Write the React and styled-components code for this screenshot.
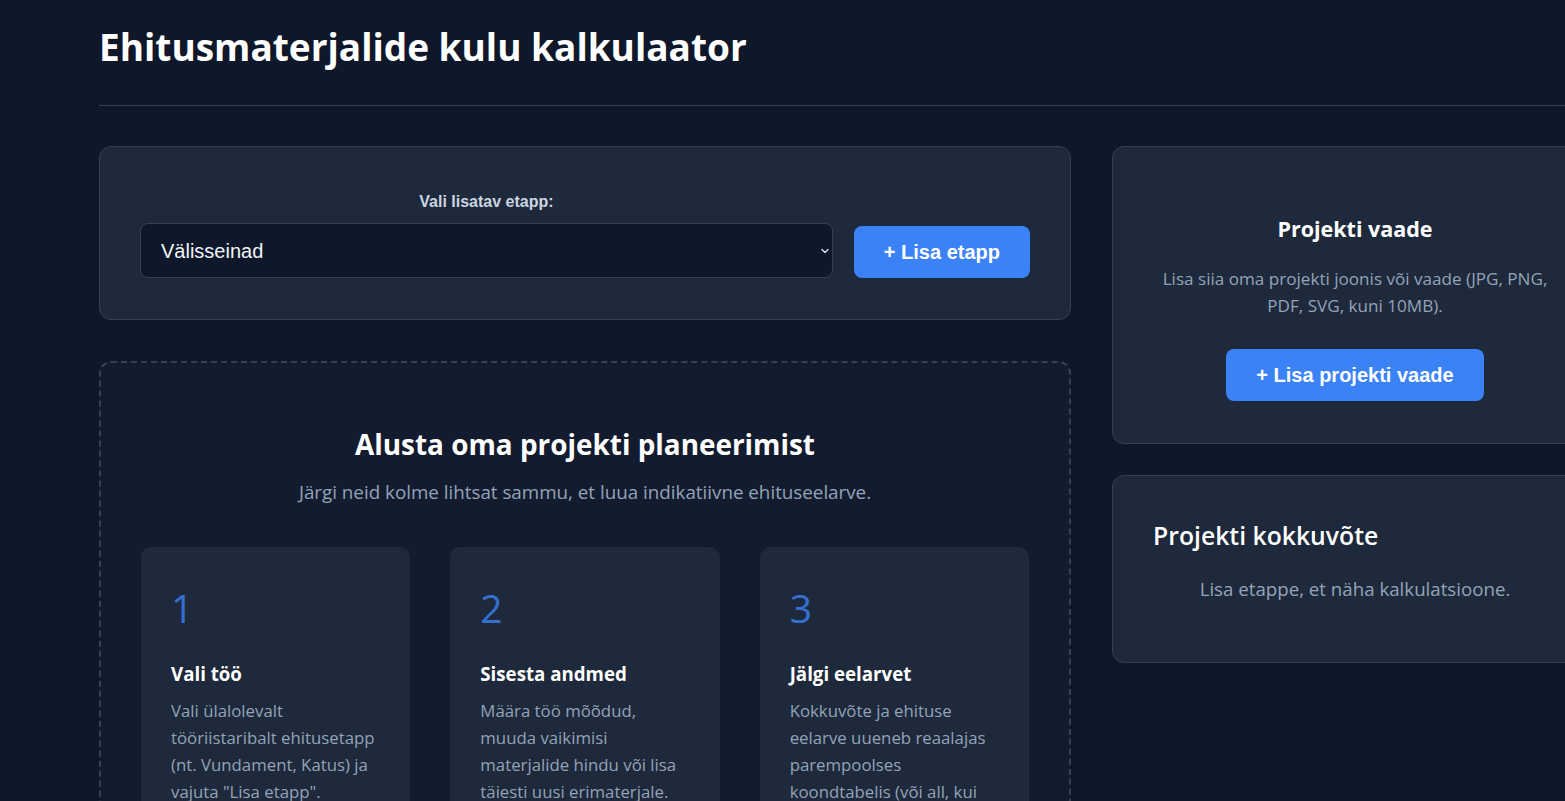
import React from 'react'
import styled, { createGlobalStyle } from 'styled-components'
import { ChevronDown } from 'lucide-react'

const GlobalStyle = createGlobalStyle`
    html, body {
        margin: 0;
        padding: 0;
        overflow: hidden;
        background: #0f172a;
    }
    body {
        font-family: "Open Sans", "Noto Sans", sans-serif;
        color: #f1f5f9;
    }
    * { box-sizing: border-box; }
`;

const Page = styled.div`
    width: 1499px;
    margin-left: 99px;
`;

const Header = styled.header`
    padding: 19px 0 30px;
    border-bottom: 1px solid #334155;
    margin-bottom: 40px;
`;

const Title = styled.h1`
    margin: 0;
    font-size: 37px;
    line-height: 56px;
    font-weight: 700;
    color: #ffffff;
`;

const Layout = styled.div`
    display: grid;
    grid-template-columns: 2fr 1fr;
    gap: 41px;
    align-items: start;
`;

const Column = styled.div`
    display: flex;
    flex-direction: column;
    gap: ${({ gap }) => gap}px;
`;

const Card = styled.section`
    background: #1e293b;
    border: 1px solid #334155;
    border-radius: 12px;
    padding: ${({ pad }) => pad || '40px'};
    text-align: ${({ center }) => (center ? 'center' : 'left')};
`;

const Toolbar = styled.div`
    display: flex;
    align-items: flex-end;
    gap: 21px;
`;

const FieldGroup = styled.div`
    flex: 1;
    display: flex;
    flex-direction: column;
`;

const Label = styled.label`
    font-family: "Liberation Sans", Arial, sans-serif;
    font-weight: 700;
    font-size: 16px;
    line-height: 24px;
    color: #cbd5e1;
    text-align: center;
    margin-bottom: 9px;
`;

const SelectWrap = styled.div`
    position: relative;
`;

const Select = styled.select`
    width: 100%;
    height: 55px;
    appearance: none;
    background: #0f172a;
    color: #f1f5f9;
    border: 1px solid #334155;
    border-radius: 8px;
    padding: 0 36px 0 20px;
    font-family: "Liberation Sans", Arial, sans-serif;
    font-size: 20px;
    outline: none;
`;

const Chevron = styled(ChevronDown)`
    position: absolute;
    right: 2px;
    top: 50%;
    transform: translateY(-50%);
    pointer-events: none;
`;

const PrimaryButton = styled.button`
    background: #3b82f6;
    color: #ffffff;
    border: none;
    border-radius: 8px;
    height: 52px;
    padding: 0 30px;
    font-family: "Liberation Sans", Arial, sans-serif;
    font-weight: 700;
    font-size: 20px;
    cursor: pointer;
    white-space: nowrap;
`;

const Placeholder = styled.section`
    background: rgba(30, 41, 59, 0.3);
    border: 2px dashed #334155;
    border-radius: 12px;
    padding: 62px 40px 40px;
    text-align: center;
`;

const PlaceholderTitle = styled.h2`
    margin: 0 0 16px;
    font-size: 27.9px;
    line-height: 38px;
    font-weight: 700;
    color: #ffffff;
`;

const PlaceholderText = styled.p`
    margin: 0 0 41px;
    font-size: 18.8px;
    line-height: 27px;
    color: #94a3b8;
`;

const Steps = styled.div`
    display: grid;
    grid-template-columns: repeat(3, 1fr);
    gap: 40px;
    text-align: left;
`;

const StepCard = styled.div`
    background: #1e293b;
    border-radius: 10px;
    padding: 30px;
`;

const StepNumber = styled.div`
    font-size: 39px;
    line-height: 62px;
    font-weight: 400;
    color: #3b82f6;
    opacity: 0.8;
    margin-bottom: 23px;
`;

const StepTitle = styled.h3`
    margin: 0 0 11px;
    font-size: 18.7px;
    line-height: 24px;
    font-weight: 700;
    color: #ffffff;
`;

const StepText = styled.p`
    margin: 0;
    font-size: 16.8px;
    line-height: 27px;
    color: #94a3b8;
`;

const SideTitle = styled.h3`
    margin: 0 0 ${({ gap }) => gap}px;
    font-size: ${({ size }) => size}px;
    line-height: 1.4;
    font-weight: ${({ weight }) => weight};
    color: #ffffff;
`;

const SideText = styled.p`
    margin: 0 0 ${({ gap }) => gap}px;
    font-size: ${({ size }) => size}px;
    line-height: 27px;
    color: #94a3b8;
    text-align: center;
`;

const steps = [
    {
        n: 1,
        title: 'Vali töö',
        text: 'Vali ülalolevalt tööriistaribalt ehitusetapp (nt. Vundament, Katus) ja vajuta "Lisa etapp".',
    },
    {
        n: 2,
        title: 'Sisesta andmed',
        text: 'Määra töö mõõdud, muuda vaikimisi materjalide hindu või lisa täiesti uusi erimaterjale.',
    },
    {
        n: 3,
        title: 'Jälgi eelarvet',
        text: 'Kokkuvõte ja ehituse eelarve uueneb reaalajas parempoolses koondtabelis (või all, kui kasutad mobiili).',
    },
];

const App = () => {
    return (
        <Page>
            <GlobalStyle />
            <Header>
                <Title>Ehitusmaterjalide kulu kalkulaator</Title>
            </Header>

            <Layout>
                <Column gap={41}>
                    <Card pad="43px 40px 41px">
                        <Toolbar>
                            <FieldGroup>
                                <Label htmlFor="stage">Vali lisatav etapp:</Label>
                                <SelectWrap>
                                    <Select id="stage" defaultValue="valisseinad">
                                        <option value="vundament">Vundament</option>
                                        <option value="valisseinad">Välisseinad</option>
                                        <option value="katus">Katus</option>
                                    </Select>
                                    <Chevron size={12} strokeWidth={2.5} color="#e2e8f0" />
                                </SelectWrap>
                            </FieldGroup>
                            <PrimaryButton>+ Lisa etapp</PrimaryButton>
                        </Toolbar>
                    </Card>

                    <Placeholder>
                        <PlaceholderTitle>Alusta oma projekti planeerimist</PlaceholderTitle>
                        <PlaceholderText>
                            Järgi neid kolme lihtsat sammu, et luua indikatiivne ehituseelarve.
                        </PlaceholderText>
                        <Steps>
                            {steps.map((s) => (
                                <StepCard key={s.n}>
                                    <StepNumber>{s.n}</StepNumber>
                                    <StepTitle>{s.title}</StepTitle>
                                    <StepText>{s.text}</StepText>
                                </StepCard>
                            ))}
                        </Steps>
                    </Placeholder>
                </Column>

                <Column gap={31}>
                    <Card center pad="67px 40px 42px">
                        <SideTitle size={21.5} weight={700} gap={21}>Projekti vaade</SideTitle>
                        <SideText size={17.1} gap={30}>
                            Lisa siia oma projekti joonis või vaade (JPG, PNG, PDF, SVG, kuni 10MB).
                        </SideText>
                        <PrimaryButton>+ Lisa projekti vaade</PrimaryButton>
                    </Card>

                    <Card pad="43px 40px 60px">
                        <SideTitle size={24.75} weight={600} gap={21}>Projekti kokkuvõte</SideTitle>
                        <SideText size={18.7} gap={0}>Lisa etappe, et näha kalkulatsioone.</SideText>
                    </Card>
                </Column>
            </Layout>
        </Page>
    )
}

export default App
